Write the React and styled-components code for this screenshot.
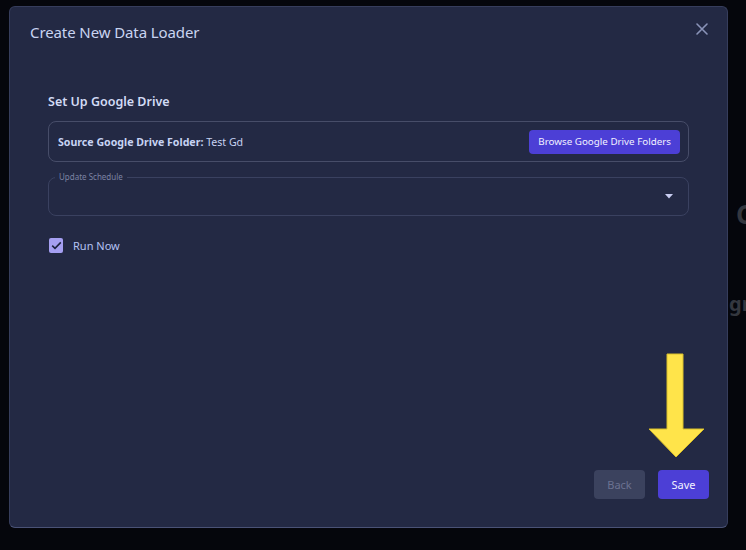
import styled, { createGlobalStyle } from 'styled-components';

const GlobalStyle = createGlobalStyle`
  html, body {
    margin: 0;
    padding: 0;
    background: #05060c;
    font-family: "Noto Sans", "Open Sans", sans-serif;
  }
`;

const Page = styled.div`
  width: 746px;
  height: 550px;
  overflow: hidden;
  background: #05060c;
  position: relative;
`;

const BehindColumn = styled.div`
  padding-top: 196px;
  display: flex;
  flex-direction: column;
  gap: 58px;
  color: #34373f;
  font-weight: 700;
  white-space: nowrap;
`;

const BehindHeading = styled.div`
  font-size: ${(p) => p.size}px;
  margin-left: ${(p) => p.left}px;
`;

const Modal = styled.div`
  position: absolute;
  left: 9px;
  top: 6px;
  width: 719px;
  height: 522px;
  box-sizing: border-box;
  background: #232944;
  border: 1px solid #363d5c;
  border-bottom-color: #4a5276;
  border-radius: 6px;
  display: flex;
  flex-direction: column;
`;

const Header = styled.div`
  display: flex;
  align-items: center;
  justify-content: space-between;
  padding: 14px 18px 0 20px;
  height: 22px;
`;

const Title = styled.h2`
  margin: 0;
  font-size: 15px;
  font-weight: 400;
  color: #c9d4f1;
  letter-spacing: -0.1px;
`;

const CloseButton = styled.button`
  background: none;
  border: none;
  padding: 0;
  display: flex;
  color: #8a93b8;
  cursor: pointer;
  margin-top: -6px;
`;

const Body = styled.div`
  flex: 1;
  display: flex;
  flex-direction: column;
  padding: 50px 38px 0 38px;
`;

const SectionTitle = styled.h3`
  margin: 0 0 11px 0;
  font-size: 12.5px;
  font-weight: 600;
  color: #d2dbf5;
`;

const SourceBox = styled.div`
  height: 41px;
  box-sizing: border-box;
  border: 1px solid #474d69;
  border-radius: 8px;
  display: flex;
  align-items: center;
  justify-content: space-between;
  padding: 0 8px 0 9px;
`;

const SourceText = styled.span`
  font-size: 10.6px;
  color: #c7d3f3;
  b {
    font-weight: 700;
  }
`;

const PrimaryButton = styled.button`
  background: #4c3fd6;
  color: #f2f2ff;
  border: none;
  border-radius: 4px;
  font-family: inherit;
  font-size: ${(p) => p.fontSize || 10}px;
  height: ${(p) => p.h}px;
  width: ${(p) => (p.w ? `${p.w}px` : 'auto')};
  padding: 0 ${(p) => p.px}px;
  cursor: pointer;
`;

const SelectBox = styled.div`
  margin-top: 15px;
  height: 39px;
  box-sizing: border-box;
  border: 1px solid #3a4160;
  border-radius: 8px;
  padding: 0 15px 0 10px;
  display: flex;
  align-items: center;
  justify-content: flex-end;
  position: relative;
`;

const FloatingLabel = styled.span`
  position: absolute;
  left: 6px;
  top: -6px;
  font-size: 8px;
  line-height: 10px;
  color: #7c83a3;
  padding: 0 4px;
  background: #232944;
`;

const CheckRow = styled.label`
  display: flex;
  align-items: center;
  gap: 10px;
  margin-top: 22px;
  margin-left: 1px;
  font-size: 11px;
  color: #b4c2f3;
`;

const CheckBoxMark = styled.span`
  width: 14px;
  height: 15px;
  border-radius: 2px;
  background: #a59ff2;
  display: flex;
  align-items: center;
  justify-content: center;
`;

const Footer = styled.div`
  display: flex;
  justify-content: flex-end;
  align-items: flex-end;
  gap: 13px;
  padding: 0 18px 28px 0;
  position: relative;
`;

const SecondaryButton = styled.button`
  background: #3b425e;
  color: #6b7291;
  border: none;
  border-radius: 4px;
  font-family: inherit;
  font-size: 11px;
  height: 29px;
  width: 51px;
`;

const Arrow = styled.svg`
  position: absolute;
  right: 21px;
  bottom: 68px;
`;

export default function App() {
  return (
    <>
      <GlobalStyle />
      <Page>
        <BehindColumn>
          <BehindHeading size={26} left={736}>Connect</BehindHeading>
          <BehindHeading size={20} left={729}>grow</BehindHeading>
        </BehindColumn>
        <Modal>
          <Header>
            <Title>Create New Data Loader</Title>
            <CloseButton aria-label="close">
              <svg width="14" height="14" viewBox="0 0 14 14">
                <path d="M2 2 L12 12 M12 2 L2 12" stroke="currentColor" strokeWidth="1.6" strokeLinecap="round" />
              </svg>
            </CloseButton>
          </Header>
          <Body>
            <SectionTitle>Set Up Google Drive</SectionTitle>
            <SourceBox>
              <SourceText>
                <b>Source Google Drive Folder:</b> Test Gd
              </SourceText>
              <PrimaryButton h={24} px={9} fontSize={9.8}>Browse Google Drive Folders</PrimaryButton>
            </SourceBox>
            <SelectBox>
              <FloatingLabel>Update Schedule</FloatingLabel>
              <svg width="8" height="5" viewBox="0 0 8 5">
                <path d="M0 0 L8 0 L4 4.5 Z" fill="#c9cdf2" />
              </svg>
            </SelectBox>
            <CheckRow>
              <CheckBoxMark>
                <svg width="11" height="9" viewBox="0 0 11 9">
                  <path d="M1.2 4.6 L4 7.3 L9.8 1.4" stroke="#1d2340" strokeWidth="1.6" fill="none" />
                </svg>
              </CheckBoxMark>
              Run Now
            </CheckRow>
          </Body>
          <Footer>
            <Arrow width="58" height="106" viewBox="0 0 58 106">
              <path
                d="M19 1 L35 1 L35 76 L56 76 L28 104 L1 76 L19 76 Z"
                fill="#ffe44a"
                stroke="#d9bf2a"
                strokeWidth="1"
              />
            </Arrow>
            <SecondaryButton disabled>Back</SecondaryButton>
            <PrimaryButton h={29} w={51} px={0} fontSize={11}>
              Save
            </PrimaryButton>
          </Footer>
        </Modal>
      </Page>
    </>
  );
}
